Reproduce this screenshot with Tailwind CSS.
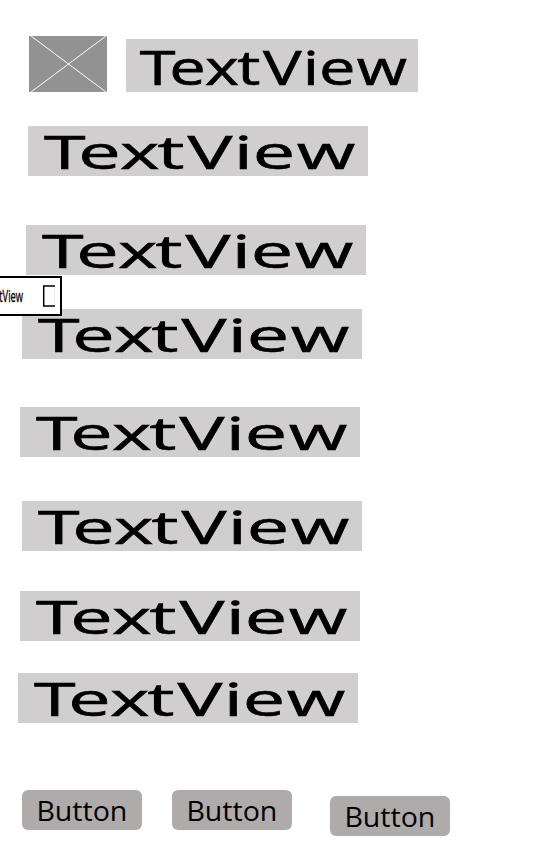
<!DOCTYPE html>
<html lang="en">
<head>
<meta charset="utf-8">
<title>Wireframe</title>
<script src="https://cdn.jsdelivr.net/npm/@tailwindcss/browser@4"></script>
</head>
<body class="bg-white">
<main class="relative flex h-[864px] w-[540px] flex-col items-start overflow-hidden bg-white font-['Open_Sans','Noto_Sans',sans-serif] text-black">
  <div class="mt-9 ml-[29px] flex items-end gap-[19px]">
    <svg class="block h-14 w-[78px] bg-[#929292]" viewBox="0 0 78 56"><path d="M2 0L77 56M77 0L2 56" stroke="#fff" stroke-width="1" fill="none"/></svg>
    <svg class="block h-[53px] w-[292px] overflow-visible bg-[#d0cece]" viewBox="0 0 340 50" preserveAspectRatio="none"><text transform="scale(1.66 1)" x="9.6 30.3 55.5 78 96.1 124 135.4 161.9" y="43" font-size="45.5" stroke="#000" stroke-width=".6">TextView</text></svg>
  </div>
  <svg class="mt-[34px] ml-7 block h-[50px] w-[340px] overflow-visible bg-[#d0cece]" viewBox="0 0 340 50"><text transform="scale(1.66 1)" x="9.6 30.3 55.5 78 96.1 124 135.4 161.9" y="43" font-size="45.5" stroke="#000" stroke-width=".6">TextView</text></svg>
  <svg class="mt-[49px] ml-[26px] block h-[50px] w-[340px] overflow-visible bg-[#d0cece]" viewBox="0 0 340 50"><text transform="scale(1.66 1)" x="9.6 30.3 55.5 78 96.1 124 135.4 161.9" y="43" font-size="45.5" stroke="#000" stroke-width=".6">TextView</text></svg>
  <svg class="mt-[34px] ml-[22px] block h-[50px] w-[340px] overflow-visible bg-[#d0cece]" viewBox="0 0 340 50"><text transform="scale(1.66 1)" x="9.6 30.3 55.5 78 96.1 124 135.4 161.9" y="43" font-size="45.5" stroke="#000" stroke-width=".6">TextView</text></svg>
  <svg class="mt-12 ml-5 block h-[50px] w-[340px] overflow-visible bg-[#d0cece]" viewBox="0 0 340 50"><text transform="scale(1.66 1)" x="9.6 30.3 55.5 78 96.1 124 135.4 161.9" y="43" font-size="45.5" stroke="#000" stroke-width=".6">TextView</text></svg>
  <svg class="mt-11 ml-[22px] block h-[50px] w-[340px] overflow-visible bg-[#d0cece]" viewBox="0 0 340 50"><text transform="scale(1.66 1)" x="9.6 30.3 55.5 78 96.1 124 135.4 161.9" y="43" font-size="45.5" stroke="#000" stroke-width=".6">TextView</text></svg>
  <svg class="mt-10 ml-5 block h-[50px] w-[340px] overflow-visible bg-[#d0cece]" viewBox="0 0 340 50"><text transform="scale(1.66 1)" x="9.6 30.3 55.5 78 96.1 124 135.4 161.9" y="43" font-size="45.5" stroke="#000" stroke-width=".6">TextView</text></svg>
  <svg class="mt-8 ml-[18px] block h-[50px] w-[340px] overflow-visible bg-[#d0cece]" viewBox="0 0 340 50"><text transform="scale(1.66 1)" x="9.6 30.3 55.5 78 96.1 124 135.4 161.9" y="43" font-size="45.5" stroke="#000" stroke-width=".6">TextView</text></svg>
  <div class="mt-[67px] ml-[22px] flex items-start">
    <svg class="block h-10 w-[120px] rounded-md bg-[#afabab]" viewBox="0 0 120 40"><text x="14.4" y="31" font-size="28" textLength="91" lengthAdjust="spacingAndGlyphs">Button</text></svg>
    <svg class="ml-[30px] block h-10 w-[120px] rounded-md bg-[#afabab]" viewBox="0 0 120 40"><text x="14.4" y="31" font-size="28" textLength="91" lengthAdjust="spacingAndGlyphs">Button</text></svg>
    <svg class="mt-1.5 ml-[38px] block h-10 w-[120px] rounded-md bg-[#afabab]" viewBox="0 0 120 40"><text x="14.4" y="31" font-size="28" textLength="91" lengthAdjust="spacingAndGlyphs">Button</text></svg>
  </div>
  <div class="absolute top-[276px] left-0 h-10 w-[62px] border-y-2 border-r-2 border-black bg-white">
    <svg class="block h-9 w-[60px]" viewBox="0 0 60 36">
      <text x="-16" y="24.3" font-size="17" textLength="39" lengthAdjust="spacingAndGlyphs" stroke="#000" stroke-width=".4">TextView</text>
      <path d="M55 8H43.7V28H55" fill="none" stroke="#000" stroke-width="1.5"/>
      <path d="M54.5 9V27" stroke="#ddd" stroke-width=".6"/>
    </svg>
  </div>
</main>
</body>
</html>
